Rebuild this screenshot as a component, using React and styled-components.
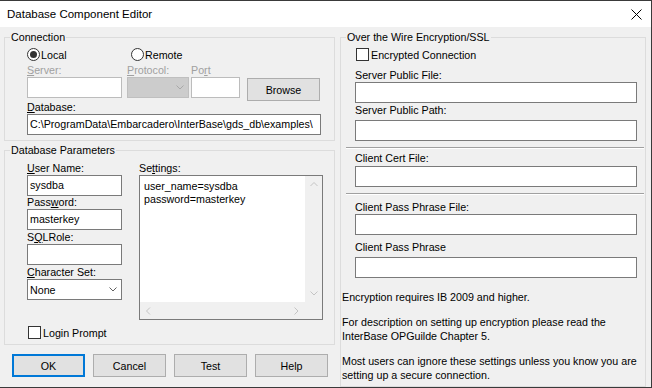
import React from "react";
import styled, { createGlobalStyle } from "styled-components";

const GlobalStyle = createGlobalStyle`
  html, body { margin: 0; padding: 0; background: #f0f0f0; }
  body {
    font-family: "Liberation Sans", Arial, sans-serif;
    font-size: 10.7px;
    color: #000;
  }
  * { box-sizing: border-box; }
`;

const Window = styled.div`
  width: 652px;
  height: 388px;
  display: flex;
  flex-direction: column;
  background: #f0f0f0;
  border-top: 1px solid #3a3a3a;
  border-right: 1px solid #3a3a3a;
  border-bottom: 1px solid #3a3a3a;
`;

const TitleBar = styled.div`
  flex: none;
  height: 26px;
  background: #fff;
  display: flex;
  align-items: center;
  justify-content: space-between;
  padding: 0 9px 0 7px;
  font-size: 11.5px;
`;

const Body = styled.div`
  flex: 1;
  min-height: 0;
  display: flex;
  gap: 5px;
  padding: 3px 5px 0 4px;
`;

const Column = styled.div`
  flex: none;
  width: ${(p) => p.$w}px;
  display: flex;
  flex-direction: column;
`;

const Group = styled.fieldset`
  margin: ${(p) => p.$mt || 0}px 0 0 0;
  padding: 0;
  min-width: 0;
  border: 1px solid #dcdcdc;
  height: ${(p) => p.$h}px;
`;

const Caption = styled.legend`
  margin-left: 5px;
  padding: 0 1px;
  line-height: 14px;
  font-size: inherit;
`;

const Stack = styled.div`
  display: flex;
  flex-direction: column;
  padding: ${(p) => p.$pt || 0}px ${(p) => p.$pr || 0}px 0 ${(p) => p.$pl || 0}px;
`;

const Row = styled.div`
  display: flex;
  align-items: ${(p) => p.$align || "flex-start"};
  margin-top: ${(p) => p.$mt || 0}px;
  margin-left: ${(p) => p.$ml || 0}px;
  gap: ${(p) => p.$gap || 0}px;
`;

const Option = styled.div`
  display: flex;
  align-items: center;
  height: 13px;
  gap: ${(p) => p.$gap ?? 1}px;
  width: ${(p) => (p.$w ? `${p.$w}px` : "auto")};
  white-space: nowrap;
`;

const RadioCircle = styled.span`
  flex: none;
  width: 13px;
  height: 13px;
  border-radius: 50%;
  border: 1px solid #333;
  background: #fff;
  display: flex;
  align-items: center;
  justify-content: center;
  &::after {
    content: "";
    width: 7px;
    height: 7px;
    border-radius: 50%;
    background: ${(p) => (p.$checked ? "#333" : "transparent")};
  }
`;

const CheckBox = styled.span`
  flex: none;
  width: 13px;
  height: 13px;
  border: 1px solid #333;
  background: #fff;
`;

const Field = styled.div`
  flex: none;
  display: flex;
  flex-direction: column;
  width: ${(p) => (p.$w ? `${p.$w}px` : "auto")};
  margin-left: ${(p) => p.$ml || 0}px;
`;

const Label = styled.div`
  height: 13px;
  line-height: 13px;
  white-space: nowrap;
  color: ${(p) => (p.$disabled ? "#a0a0a0" : "#000")};
  margin-top: ${(p) => p.$mt || 0}px;
  margin-bottom: ${(p) => p.$mb || 0}px;
`;

const TextBox = styled.div`
  height: 21px;
  border: 1px solid ${(p) => (p.$disabled ? "#bcbcbc" : "#7a7a7a")};
  background: #fff;
  padding: 0 2px;
  line-height: 19px;
  white-space: nowrap;
  overflow: hidden;
`;

const Combo = styled.div`
  height: 21px;
  border: 1px solid ${(p) => (p.$disabled ? "#bfbfbf" : "#7a7a7a")};
  background: ${(p) => (p.$disabled ? "#cccccc" : "#fff")};
  display: flex;
  align-items: center;
  justify-content: space-between;
  padding: 0 4px 0 2px;
`;

const Button = styled.div`
  flex: none;
  width: 73px;
  height: 23px;
  margin-top: ${(p) => p.$mt || 0}px;
  margin-left: ${(p) => p.$ml || 0}px;
  background: #e1e1e1;
  border: ${(p) => (p.$focused ? "2px solid #0078d7" : "1px solid #adadad")};
  display: flex;
  align-items: center;
  justify-content: center;
`;

const ButtonBar = styled.div`
  display: flex;
  gap: 8px;
  margin-top: 9px;
  padding-left: 8px;
`;

const Memo = styled.div`
  width: 184px;
  height: 145px;
  border: 1px solid #7a7a7a;
  background: #fff;
  display: grid;
  grid-template-columns: 1fr 17px;
  grid-template-rows: 1fr 17px;
`;

const MemoText = styled.div`
  padding: 4px 0 0 4px;
  line-height: 13px;
  white-space: pre;
`;

const ScrollTrack = styled.div`
  background: #f0f0f0;
  display: flex;
  flex-direction: ${(p) => (p.$vertical ? "column" : "row")};
  justify-content: space-between;
`;

const ArrowCell = styled.div`
  width: 17px;
  height: 17px;
  display: flex;
  align-items: center;
  justify-content: center;
`;

const Corner = styled.div`
  background: #f0f0f0;
`;

const Separator = styled.div`
  height: 2px;
  margin: ${(p) => p.$mt || 0}px 1px 0 5px;
  border-top: 1px solid #a0a0a0;
  border-bottom: 1px solid #ffffff;
`;

const Note = styled.div`
  margin: ${(p) => p.$mt || 0}px 0 0 1px;
  line-height: 14px;
  white-space: nowrap;
`;

const Chevron = ({ dir = "down", color = "#606060" }) => {
  const paths = {
    down: "M0.5 0.5 L4 4 L7.5 0.5",
    up: "M0.5 4 L4 0.5 L7.5 4",
    left: "M4 0.5 L0.5 4 L4 7.5",
    right: "M0.5 0.5 L4 4 L0.5 7.5",
  };
  const vertical = dir === "down" || dir === "up";
  return (
    <svg
      width={vertical ? 8 : 5}
      height={vertical ? 5 : 8}
      viewBox={vertical ? "0 0 8 5" : "0 0 5 8"}
      style={{ display: "block" }}
    >
      <path d={paths[dir]} fill="none" stroke={color} strokeWidth="1" />
    </svg>
  );
};

const CloseIcon = () => (
  <svg width="11" height="11" viewBox="0 0 11 11" style={{ display: "block" }}>
    <path d="M0.5 0.5 L10.5 10.5 M10.5 0.5 L0.5 10.5" stroke="#000" strokeWidth="1" />
  </svg>
);

export default function App() {
  return (
    <>
      <GlobalStyle />
      <Window>
        <TitleBar>
          <span>Database Component Editor</span>
          <CloseIcon />
        </TitleBar>
        <Body>
          <Column $w={331}>
            <Group $h={111}>
              <Caption>Connection</Caption>
              <Stack $pt={4} $pl={22}>
                <Row>
                  <Option $w={104}>
                    <RadioCircle $checked />
                    <span>Local</span>
                  </Option>
                  <Option>
                    <RadioCircle />
                    <span>Remote</span>
                  </Option>
                </Row>
                <Row $mt={3}>
                  <Field $w={95}>
                    <Label $disabled>
                      <u>S</u>erver:
                    </Label>
                    <TextBox $disabled />
                  </Field>
                  <Field $w={62} $ml={5}>
                    <Label $disabled>
                      <u>P</u>rotocol:
                    </Label>
                    <Combo $disabled>
                      <span />
                      <Chevron color="#a8a8a8" />
                    </Combo>
                  </Field>
                  <Field $w={49} $ml={2}>
                    <Label $disabled>
                      Po<u>r</u>t
                    </Label>
                    <TextBox $disabled />
                  </Field>
                  <Button $mt={14} $ml={7}>
                    Browse
                  </Button>
                </Row>
                <Field $w={294}>
                  <Label>
                    <u>D</u>atabase:
                  </Label>
                  <TextBox>C:\ProgramData\Embarcadero\InterBase\gds_db\examples\</TextBox>
                </Field>
              </Stack>
            </Group>

            <Group $h={202} $mt={2}>
              <Caption>Database Parameters</Caption>
              <Stack $pt={5} $pl={22}>
                <Row $gap={17}>
                  <Field $w={95}>
                    <Label>
                      <u>U</u>ser Name:
                    </Label>
                    <TextBox>sysdba</TextBox>
                    <Label>
                      Pass<u>w</u>ord:
                    </Label>
                    <TextBox>masterkey</TextBox>
                    <Label $mt={1}>
                      S<u>Q</u>LRole:
                    </Label>
                    <TextBox />
                    <Label $mt={1}>
                      <u>C</u>haracter Set:
                    </Label>
                    <Combo>
                      <span>None</span>
                      <Chevron />
                    </Combo>
                  </Field>
                  <Field>
                    <Label>
                      Se<u>t</u>tings:
                    </Label>
                    <Memo>
                      <MemoText>{"user_name=sysdba\npassword=masterkey"}</MemoText>
                      <ScrollTrack $vertical>
                        <ArrowCell>
                          <Chevron dir="up" color="#c4c4c4" />
                        </ArrowCell>
                        <ArrowCell>
                          <Chevron dir="down" color="#c4c4c4" />
                        </ArrowCell>
                      </ScrollTrack>
                      <ScrollTrack>
                        <ArrowCell>
                          <Chevron dir="left" color="#c4c4c4" />
                        </ArrowCell>
                        <ArrowCell>
                          <Chevron dir="right" color="#c4c4c4" />
                        </ArrowCell>
                      </ScrollTrack>
                      <Corner />
                    </Memo>
                  </Field>
                </Row>
                <Row $mt={6} $ml={1}>
                  <Option $gap={2}>
                    <CheckBox />
                    <span>Login Prompt</span>
                  </Option>
                </Row>
              </Stack>
            </Group>

            <ButtonBar>
              <Button $focused>OK</Button>
              <Button>Cancel</Button>
              <Button>Test</Button>
              <Button>Help</Button>
            </ButtonBar>
          </Column>

          <Column $w={306}>
            <Group $h={357}>
              <Caption>Over the Wire Encryption/SSL</Caption>
              <Stack>
                <Row $mt={4} $ml={15}>
                  <Option $gap={2}>
                    <CheckBox />
                    <span>Encrypted Connection</span>
                  </Option>
                </Row>
                <Stack $pl={14} $pr={8}>
                  <Label $mt={8}>Server Public File:</Label>
                  <TextBox />
                  <Label $mt={1} $mb={3}>
                    Server Public Path:
                  </Label>
                  <TextBox />
                </Stack>
                <Separator $mt={6} />
                <Stack $pl={14} $pr={8}>
                  <Label $mt={3} $mb={1}>
                    Client Cert File:
                  </Label>
                  <TextBox />
                </Stack>
                <Separator $mt={6} />
                <Stack $pl={14} $pr={8}>
                  <Label $mt={6}>Client Pass Phrase File:</Label>
                  <TextBox />
                  <Label $mt={6} $mb={3}>
                    Client Pass Phrase
                  </Label>
                  <TextBox />
                </Stack>
                <Note $mt={12}>Encryption requires IB 2009 and higher.</Note>
                <Note $mt={11}>
                  For description on setting up encryption please read the
                  <br />
                  InterBase OPGuilde Chapter 5.
                </Note>
                <Note $mt={11}>
                  Most users can ignore these settings unless you know you are
                  <br />
                  setting up a secure connection.
                </Note>
              </Stack>
            </Group>
          </Column>
        </Body>
      </Window>
    </>
  );
}
